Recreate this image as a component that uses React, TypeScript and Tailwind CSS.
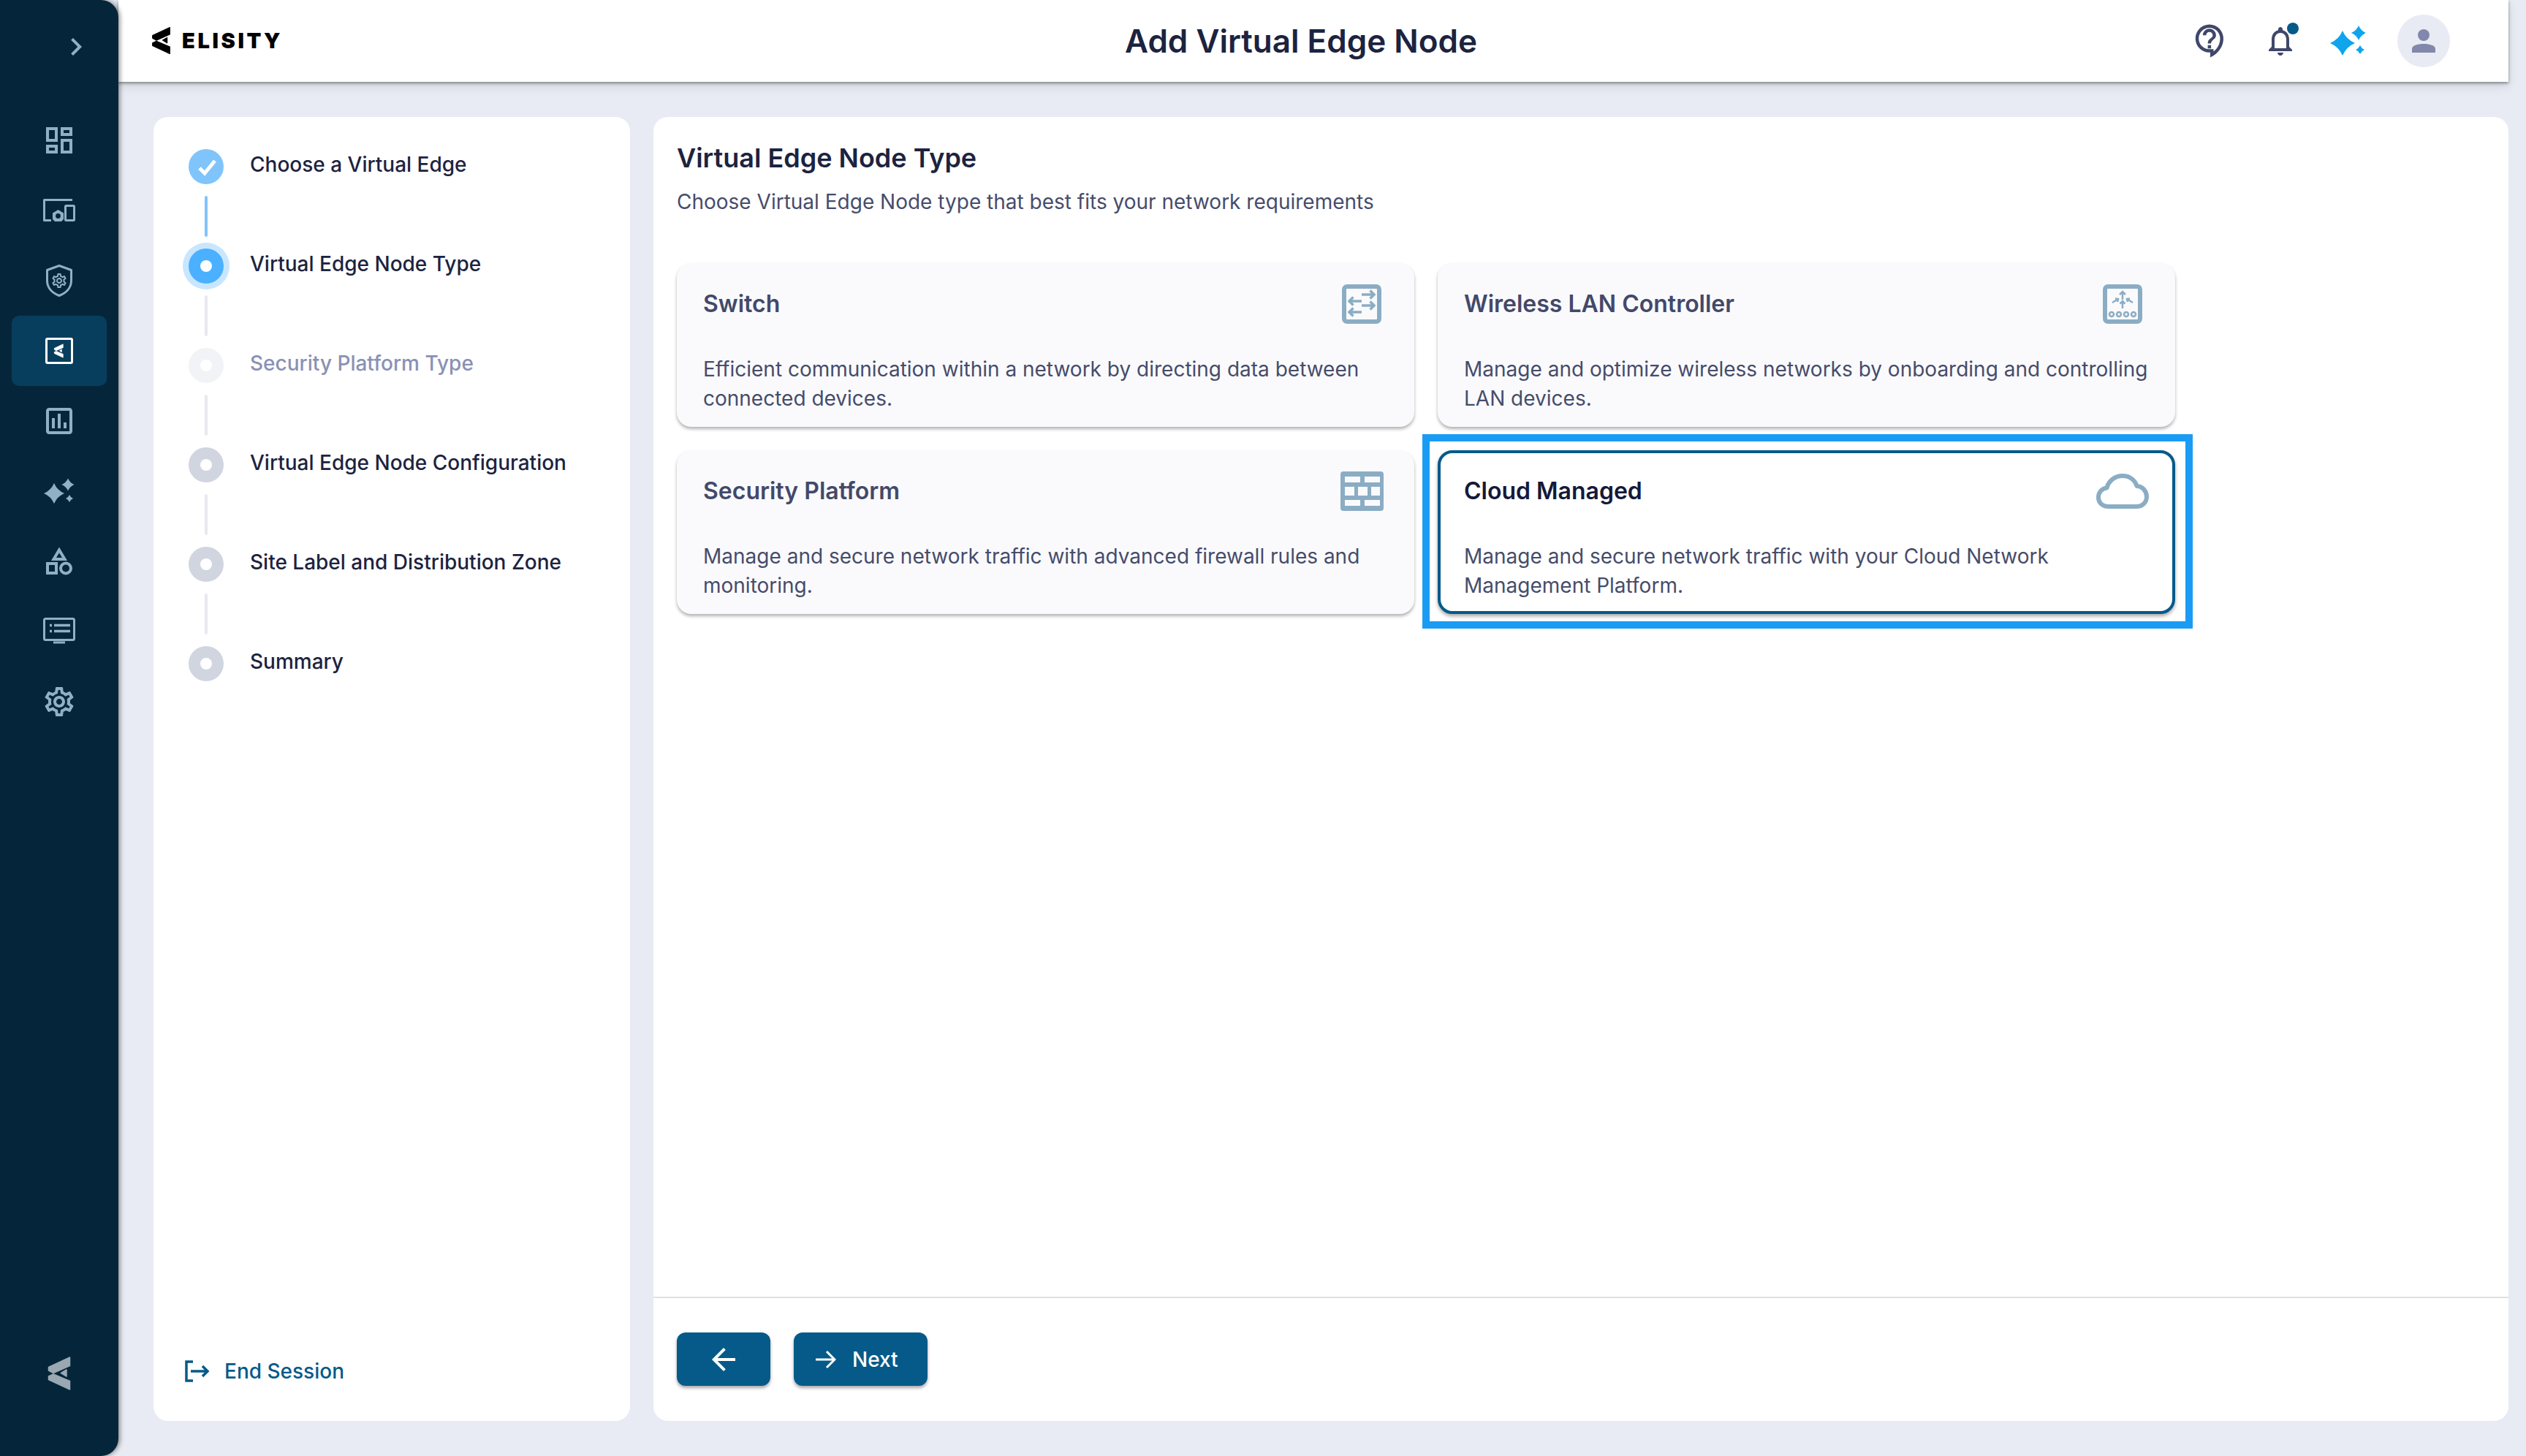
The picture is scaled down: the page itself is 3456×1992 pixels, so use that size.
import React from "react";

const GEAR = "M19.43 12.98c.04-.32.07-.64.07-.98 0-.34-.03-.66-.07-.98l2.11-1.65c.19-.15.24-.42.12-.64l-2-3.46c-.09-.16-.26-.25-.44-.25-.06 0-.12.01-.17.03l-2.49 1c-.52-.4-1.08-.73-1.69-.98l-.38-2.65C14.46 2.18 14.25 2 14 2h-4c-.25 0-.46.18-.49.42l-.38 2.65c-.61.25-1.17.59-1.69.98l-2.49-1c-.06-.02-.12-.03-.18-.03-.17 0-.34.09-.43.25l-2 3.46c-.13.22-.07.49.12.64l2.11 1.65c-.04.32-.07.65-.07.98 0 .33.03.66.07.98l-2.11 1.65c-.19.15-.24.42-.12.64l2 3.46c.09.16.26.25.44.25.06 0 .12-.01.17-.03l2.49-1c.52.4 1.08.73 1.69.98l.38 2.65c.03.24.24.42.49.42h4c.25 0 .46-.18.49-.42l.38-2.65c.61-.25 1.17-.59 1.69-.98l2.49 1c.06.02.12.03.18.03.17 0 .34-.09.43-.25l2-3.46c.12-.22.07-.49-.12-.64l-2.11-1.65zm-1.98-1.71c.04.31.05.52.05.73 0 .21-.02.43-.05.73l-.14 1.13.89.7 1.08.84-.7 1.21-1.27-.51-1.04-.42-.9.68c-.43.32-.84.56-1.25.73l-1.06.43-.16 1.13-.2 1.35h-1.4l-.19-1.35-.16-1.13-1.06-.43c-.43-.18-.83-.41-1.23-.71l-.91-.7-1.06.43-1.27.51-.7-1.21 1.08-.84.89-.7-.14-1.13c-.03-.31-.05-.54-.05-.74s.02-.43.05-.73l.14-1.13-.89-.7-1.08-.84.7-1.21 1.27.51 1.04.42.9-.68c.43-.32.84-.56 1.25-.73l1.06-.43.16-1.13.2-1.35h1.39l.19 1.35.16 1.13 1.06.43c.43.18.83.41 1.23.71l.91.7 1.06-.43 1.27-.51.7 1.21-1.07.85-.89.7.14 1.13zM12 8c-2.21 0-4 1.79-4 4s1.79 4 4 4 4-1.79 4-4-1.79-4-4-4zm0 6c-1.1 0-2-.9-2-2s.9-2 2-2 2 .9 2 2-.9 2-2 2z";

const star = (cx: number, cy: number, h: number) => {
  const c = h * 0.3;
  return `M${cx} ${cy - h}Q${cx + c} ${cy - c} ${cx + h} ${cy}Q${cx + c} ${cy + c} ${cx} ${cy + h}Q${cx - c} ${cy + c} ${cx - h} ${cy}Q${cx - c} ${cy - c} ${cx} ${cy - h}Z`;
};

function Logo({ className, color }: { className: string; color: string }) {
  return (
    <svg viewBox="0 0 32 48" className={className} fill={color} stroke={color} strokeWidth="1.5" strokeLinejoin="round">
      <polygon points="30.5,2 30.5,13.500 8,23.500 1.500,20 1.500,15.500" />
      <polygon points="30.5,34.500 8,25 1.500,28 1.500,32.500 30.5,46" />
      <polygon points="26,19 18.5,23.5 26,28" />
    </svg>
  );
}

const NAVC = "#8fb0c6";

function NavIcon({ i }: { i: number }) {
  const p = { viewBox: "0 0 48 48", className: "w-[48px] h-[48px]" };
  switch (i) {
    case 0:
      return (
        <svg {...p} fill={NAVC}>
          <path transform="scale(2)" d="M19 5v2h-4V5h4M9 5v6H5V5h4m10 8v6h-4v-6h4M9 17v2H5v-2h4M21 3h-8v6h8V3zM11 3H3v10h8V3zm10 8h-8v10h8V11zm-10 4H3v6h8v-6z" />
        </svg>
      );
    case 1:
      return (
        <svg {...p} fill="none" stroke={NAVC} strokeWidth="3">
          <path d="M42 9.5H3.5V37.5H13" strokeLinejoin="round" />
          <rect x="32.5" y="17.5" width="12" height="20" rx="1" />
          <polygon points="22.5,23 30,27.5 30,36 27,39 18,39 15,36 15,27.5" fill={NAVC} stroke="none" />
          <circle cx="22.5" cy="31.5" r="3.4" fill="#05263a" stroke="none" />
        </svg>
      );
    case 2:
      return (
        <svg {...p} fill="none" stroke={NAVC}>
          <path d="M24 3.5 40.5 9.5V24C40.5 34 33 41 24 44.5 15 41 7.5 34 7.5 24V9.5Z" strokeWidth="3" strokeLinejoin="round" />
          <path transform="translate(12 12)" d={GEAR} fill={NAVC} stroke="none" />
        </svg>
      );
    case 3:
      return (
        <svg {...p} fill="none">
          <rect x="6.5" y="7.5" width="35" height="33" rx="1.5" stroke="#ffffff" strokeWidth="3" />
          <svg x="16.5" y="14" width="13.5" height="20" viewBox="0 0 32 48">
            <g fill="#ffffff" stroke="#ffffff" strokeWidth="1.5" strokeLinejoin="round">
              <polygon points="30.5,2 30.5,13.500 8,23.500 1.500,20 1.500,15.500" />
              <polygon points="30.5,34.500 8,25 1.500,28 1.500,32.500 30.5,46" />
              <polygon points="26,19 18.5,23.5 26,28" />
            </g>
          </svg>
        </svg>
      );
    case 4:
      return (
        <svg {...p} fill={NAVC}>
          <path transform="scale(2)" d="M19 3H5c-1.1 0-2 .9-2 2v14c0 1.1.9 2 2 2h14c1.1 0 2-.9 2-2V5c0-1.1-.9-2-2-2zm0 16H5V5h14v14zM7 10h2v7H7zm4-3h2v10h-2zm4 6h2v4h-2z" />
        </svg>
      );
    case 5:
      return (
        <svg {...p} fill={NAVC}>
          <path d={star(17, 27, 14)} />
          <path d={star(36, 15, 8.5)} />
          <path d={star(38, 34, 5)} />
        </svg>
      );
    case 6:
      return (
        <svg {...p} fill="none" stroke={NAVC} strokeWidth="4">
          <path d="M24 8.5 31.5 21H16.500Z" />
          <rect x="8" y="27" width="12" height="13" />
          <circle cx="33" cy="33.500" r="7" />
        </svg>
      );
    case 7:
      return (
        <svg {...p} fill="none" stroke={NAVC} strokeWidth="3">
          <rect x="3.500" y="6.500" width="41" height="29" rx="2" />
          <path d="M16 37.500h16v3H16z" fill={NAVC} stroke="none" />
          <path d="M11 15.500h3M17 15.500h22M11 23.500h3M17 23.500h22" strokeWidth="3.500" />
        </svg>
      );
    default:
      return (
        <svg {...p} fill={NAVC}>
          <path transform="scale(2)" d={GEAR} />
        </svg>
      );
  }
}

const ICON = "#8badc4";

function SwitchIcon() {
  return (
    <svg viewBox="0 0 54 54" className="w-[54px] h-[54px]" fill="none" stroke={ICON}>
      <rect x="3" y="3" width="48" height="48" rx="4" strokeWidth="6" />
      <g strokeWidth="3.500">
        <path d="M27 14H44M38.500 8.500 44 14l-5.500 5.500" />
        <path d="M27 23H10M15.500 17.500 10 23l5.500 5.500" />
        <path d="M27 29H44M38.500 23.500 44 29l-5.500 5.500" />
        <path d="M27 38H10M15.500 32.500 10 38l5.500 5.500" />
      </g>
    </svg>
  );
}

function WirelessIcon() {
  return (
    <svg viewBox="0 0 54 54" className="w-[54px] h-[54px]" fill="none" stroke={ICON}>
      <rect x="3" y="3" width="48" height="48" rx="4" strokeWidth="6" />
      <g strokeWidth="2.500">
        <path d="M27 21V10M23 14l4-4 4 4" />
        <path d="M27 33V23M23.500 26.500 27 23l3.500 3.500" />
        <path d="M13 25l8-5M17 19.500l4 .5-1 4" />
        <path d="M41 25l-8-5M37 19.500l-4 .5 1 4" />
        <circle cx="12" cy="41" r="3" />
        <circle cx="22" cy="41" r="3" />
        <circle cx="32" cy="41" r="3" />
        <circle cx="42" cy="41" r="3" />
      </g>
    </svg>
  );
}

function FirewallIcon() {
  return (
    <svg viewBox="0 0 59 54" className="w-[59px] h-[54px]">
      <rect width="59" height="54" rx="4" fill={ICON} />
      <g fill="#fafafc">
        <rect x="6" y="7" width="21" height="8" />
        <rect x="33" y="7" width="21" height="8" />
        <rect x="6" y="21" width="13" height="12" />
        <rect x="24" y="21" width="13" height="12" />
        <rect x="42" y="21" width="12" height="12" />
        <rect x="6" y="39" width="21" height="8" />
        <rect x="33" y="39" width="21" height="8" />
      </g>
    </svg>
  );
}

function CloudIcon() {
  return (
    <svg viewBox="0 0 72 48" className="w-[72px] h-[48px]" fill="none" stroke={ICON} strokeWidth="6">
      <path d="M17 45C8.500 45 3 40 3 32.500 3 25.500 8 20 14.500 19.500 17 9.500 26 3 36 3 45.500 3 53 8.500 55.500 17 63.500 17.500 69 24 69 31.500 69 39.500 63 45 55 45Z" strokeLinejoin="round" />
    </svg>
  );
}

const cards = [
  { t: "Switch", d: "Efficient communication within a network by directing data between connected devices.", icon: <SwitchIcon /> },
  { t: "Wireless LAN Controller", d: "Manage and optimize wireless networks by onboarding and controlling LAN devices.", icon: <WirelessIcon /> },
  { t: "Security Platform", d: "Manage and secure network traffic with advanced firewall rules and monitoring.", icon: <FirewallIcon /> },
  { t: "Cloud Managed", d: "Manage and secure network traffic with your Cloud Network Management Platform.", icon: <CloudIcon />, sel: true },
];

const steps = [
  { t: "Choose a Virtual Edge", s: "done" },
  { t: "Virtual Edge Node Type", s: "active" },
  { t: "Security Platform Type", s: "off" },
  { t: "Virtual Edge Node Configuration", s: "todo" },
  { t: "Site Label and Distribution Zone", s: "todo" },
  { t: "Summary", s: "todo" },
];

function StepDot({ s }: { s: string }) {
  if (s === "done")
    return (
      <div className="w-[48px] h-[48px] shrink-0 rounded-full bg-[#80c4fc] flex items-center justify-center">
        <svg viewBox="0 0 48 48" className="w-[48px] h-[48px]" fill="none" stroke="#ffffff" strokeWidth="5">
          <path d="M15 26l7 7 14-17" />
        </svg>
      </div>
    );
  if (s === "active")
    return (
      <div className="w-[48px] h-[48px] shrink-0 rounded-full bg-[#4ab0ff] ring-8 ring-[#c9e6ff] flex items-center justify-center">
        <div className="w-[16px] h-[16px] rounded-full bg-white" />
      </div>
    );
  return (
    <div className={s === "off" ? "w-[48px] h-[48px] shrink-0 rounded-full bg-[#f2f3f7] flex items-center justify-center" : "w-[48px] h-[48px] shrink-0 rounded-full bg-[#d0d5df] flex items-center justify-center"}>
      <div className="w-[16px] h-[16px] rounded-full bg-white" />
    </div>
  );
}

export default function App() {
  return (
    <div className="w-[3456px] h-[1992px] flex overflow-hidden bg-[#e8ebf3] [font-family:Inter,sans-serif] text-[#1c2340]">
      <aside className="relative z-20 w-[162px] h-full shrink-0 flex flex-col bg-[#05263a] rounded-r-[24px] shadow-[2px_0_6px_rgba(0,0,0,0.45)]">
        <div className="h-[144px] shrink-0 flex justify-end pt-[40px] pr-[34px]">
          <svg viewBox="0 0 48 48" className="w-[48px] h-[48px]" fill={NAVC}>
            <path transform="scale(2)" d="M10 6 8.590 7.410 13.170 12l-4.580 4.590L10 18l6-6z" />
          </svg>
        </div>
        <nav className="flex flex-col">
          {[0, 1, 2, 3, 4, 5, 6, 7, 8].map((i) => (
            <div key={i} className={i === 3 ? "mx-[16px] h-[96px] rounded-[10px] bg-[#083e5d] flex items-center justify-center" : "mx-[16px] h-[96px] flex items-center justify-center"}>
              <NavIcon i={i} />
            </div>
          ))}
        </nav>
        <div className="mt-auto pb-[89px] flex justify-center">
          <Logo className="w-[32px] h-[48px]" color="#9aa8b2" />
        </div>
      </aside>

      <div className="flex-1 min-w-0 flex flex-col pr-[24px]">
        <header className="relative z-10 h-[112px] shrink-0 bg-white flex items-center shadow-[0_2px_4px_rgba(0,0,0,0.4),0_6px_14px_rgba(0,0,0,0.1)]">
          <div className="w-[401px] shrink-0 pl-[45px] flex items-center gap-[15px] -mt-[1px]">
            <Logo className="w-[27px] h-[39px]" color="#000000" />
            <span className="text-[29px] leading-none font-black tracking-[0.125em] text-black">ELISITY</span>
          </div>
          <h1 className="flex-1 text-center text-[44px] leading-[56px] font-semibold text-[#1c2340]">Add Virtual Edge Node</h1>
          <div className="w-[435px] shrink-0 flex items-center">
            <svg viewBox="0 0 24 24" className="w-[54px] h-[54px] shrink-0" fill="#40476a">
              <path fillRule="evenodd" d="M11.500 2C6.810 2 3 5.810 3 10.500S6.810 19 11.500 19h.5v3c4.860-2.340 8-6.570 8-11.500C20 5.810 16.190 2 11.500 2zm2.500 16.400V17h-2.500C7.920 17 5 14.080 5 10.500S7.920 4 11.500 4 18 6.920 18 10.500c0 3.100-1.500 6-4 7.900zM10.500 14.500h2v2h-2zm1-10c-2.210 0-4 1.790-4 4h2c0-1.100.9-2 2-2s2 .9 2 2c0 2-3 1.750-3 5h2c0-2.250 3-2.500 3-5 0-2.210-1.790-4-4-4z" />
            </svg>
            <div className="relative ml-[45px] w-[48px] h-[48px] shrink-0">
              <svg viewBox="0 0 24 24" className="w-[48px] h-[48px]" fill="#40476a">
                <path d="M12 22c1.100 0 2-.9 2-2h-4c0 1.100.9 2 2 2zm6-6v-5c0-3.070-1.630-5.640-4.500-6.320V4c0-.83-.67-1.500-1.500-1.500s-1.500.67-1.500 1.500v.68C7.640 5.360 6 7.920 6 11v5l-2 2v1h16v-1l-2-2zm-2 1H8v-6c0-2.480 1.510-4.500 4-4.500s4 2.020 4 4.500v6z" />
              </svg>
              <span className="absolute left-[33px] -top-[1px] w-[16px] h-[16px] rounded-full bg-[#055a8a]" />
            </div>
            <svg viewBox="0 0 48 42" className="ml-[44px] w-[48px] h-[42px] shrink-0" fill="#0ea5ec">
              <path d={star(17, 24, 17)} />
              <path d={star(39, 10, 10)} />
              <path d={star(41, 33, 6)} />
            </svg>
            <div className="ml-[44px] w-[72px] h-[72px] rounded-full bg-[#e8ebf3] flex items-center justify-center shrink-0">
              <svg viewBox="0 0 72 72" className="w-[72px] h-[72px]" fill="#8288ab">
                <circle cx="36" cy="28" r="8" />
                <path d="M20 52v-5c0-5 8-7 16-7s16 2 16 7v5z" />
              </svg>
            </div>
          </div>
        </header>

        <main className="flex-1 min-h-0 flex gap-[32px] pt-[48px] pb-[48px] pl-[48px]">
          <section className="w-[652px] shrink-0 bg-white rounded-[20px] flex flex-col pt-[44px] pl-[48px] pb-[48px]">
            <div className="flex flex-col">
              {steps.map((st, i) => (
                <div key={st.t} className="flex flex-col">
                  <div className="flex items-start gap-[36px]">
                    <StepDot s={st.s} />
                    <span className={st.s === "off" ? "mt-[1px] text-[28px] leading-[40px] font-medium text-[#8a91b4]" : "mt-[1px] text-[28px] leading-[40px] font-medium text-[#1c2340]"}>{st.t}</span>
                  </div>
                  {i < steps.length - 1 && (
                    <div className={i === 0 ? "ml-[22px] my-[16px] w-[4px] h-[56px] rounded-full bg-[#80c4fc]" : "ml-[22px] my-[16px] w-[4px] h-[56px] rounded-full bg-[#e8e9f0]"} />
                  )}
                </div>
              ))}
            </div>
            <div className="mt-auto flex items-center gap-[20px] text-[#055a8a]">
              <svg viewBox="0 0 34 30" className="w-[34px] h-[30px] shrink-0 ml-[-5px]" fill="none" stroke="#055a8a" strokeWidth="3.500">
                <path d="M11 2H2v26h9" />
                <path d="M8 15h23M24 8l7 7-7 7" />
              </svg>
              <span className="text-[28px] leading-[40px] font-medium">End Session</span>
            </div>
          </section>

          <section className="flex-1 min-w-0 bg-white rounded-[20px] flex flex-col">
            <div className="flex-1 min-h-0 pt-[32px] px-[32px]">
              <h2 className="text-[36px] leading-[48px] font-semibold text-[#1c2340]">Virtual Edge Node Type</h2>
              <p className="mt-[16px] text-[28px] leading-[40px] text-[#464c6b]">Choose Virtual Edge Node type that best fits your network requirements</p>
              <div className="mt-[64px] grid grid-cols-[1009px_1009px] gap-[32px]">
                {cards.map((c) => (
                  <div
                    key={c.t}
                    className={
                      c.sel
                        ? "relative h-[224px] rounded-[20px] border-[4px] border-[#055a8a] bg-white px-[32px] pt-[32px] shadow-[0_3px_5px_rgba(0,0,0,0.35)]"
                        : "relative h-[224px] rounded-[20px] border-[4px] border-transparent bg-[#fafafc] px-[32px] pt-[32px] shadow-[0_3px_4px_rgba(0,0,0,0.3)]"
                    }
                  >
                    <div className="h-[40px] flex items-center justify-between">
                      <span className={c.sel ? "text-[32px] leading-[40px] font-semibold text-[#14193a]" : "text-[32px] leading-[40px] font-semibold text-[#43496a]"}>{c.t}</span>
                      <div className="w-[72px] flex items-center justify-center">{c.icon}</div>
                    </div>
                    <p className="mt-[49px] text-[28px] leading-[40px] text-[#464c6b]">{c.d}</p>
                    {c.sel && <div className="absolute -left-[25px] -top-[26px] -right-[28px] -bottom-[24px] border-[10px] border-[#1a9cf5] pointer-events-none" />}
                  </div>
                ))}
              </div>
            </div>
            <div className="h-[170px] shrink-0 border-t-2 border-[#e0e0e0] px-[32px] pt-[47px] flex items-start gap-[32px]">
              <button className="w-[128px] h-[73px] rounded-[12px] bg-[#055a8a] flex items-center justify-center shadow-[0_3px_4px_rgba(0,0,0,0.35)]">
                <svg viewBox="0 0 24 24" className="w-[48px] h-[48px]" fill="#ffffff">
                  <path d="M20 11H7.830l5.590-5.590L12 4l-8 8 8 8 1.410-1.410L7.830 13H20v-2z" />
                </svg>
              </button>
              <button className="w-[183px] h-[73px] rounded-[12px] bg-[#055a8a] flex items-center pl-[30px] gap-[22px] shadow-[0_3px_4px_rgba(0,0,0,0.35)] text-white">
                <svg viewBox="0 0 28 26" className="w-[28px] h-[26px] shrink-0" fill="none" stroke="#ffffff" strokeWidth="3">
                  <path d="M0 13h26M15 2l11 11-11 11" />
                </svg>
                <span className="text-[28px] leading-[40px] font-medium">Next</span>
              </button>
            </div>
          </section>
        </main>
      </div>
    </div>
  );
}
